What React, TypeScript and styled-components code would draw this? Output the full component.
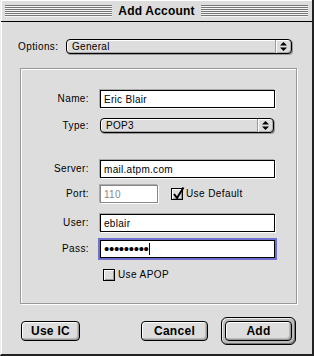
import React from 'react';
import styled, { createGlobalStyle } from 'styled-components';

const GlobalStyle = createGlobalStyle`
  html, body {
    margin: 0;
    padding: 0;
    background: #dddddd;
  }
  * {
    box-sizing: border-box;
  }
`;

const Window = styled.div`
  width: 314px;
  height: 356px;
  display: flex;
  flex-direction: column;
  background: #dddddd;
  border-left: 1px solid #eeeeee;
  border-right: 2px solid #222222;
  border-bottom: 2px solid #222222;
  font-family: 'Liberation Sans', Arial, sans-serif;
  color: #000;
`;

const TitleBar = styled.div`
  height: 22px;
  display: flex;
  align-items: center;
  gap: 3px;
  padding: 0 4px;
  background: #dddddd;
  border-bottom: 1px solid #000;
  box-shadow: inset 1px 1px 0 #fff;
`;

const Stripes = styled.div`
  flex: 1;
  height: 12px;
  background: repeating-linear-gradient(to bottom, #777 0 1px, #f4f4f4 1px 2px);
`;

const Title = styled.div`
  font-size: 12px;
  font-weight: 700;
  letter-spacing: 0.2px;
  padding: 0 3px;
  line-height: 14px;
`;

const Body = styled.div`
  flex: 1;
  display: flex;
  flex-direction: column;
  padding: 17px 16px 0 19px;
  box-shadow: inset 1px 0 0 #fff;
`;

const OptionsRow = styled.div`
  display: grid;
  grid-template-columns: 48px 226px;
  align-items: center;
  margin-left: -2px;
`;

const Label = styled.span<{ $disabled?: boolean }>`
  font-size: 10px;
  line-height: 12px;
  letter-spacing: 0.4px;
  color: ${(p) => (p.$disabled ? '#888' : '#000')};
  white-space: nowrap;
`;

const FieldLabel = styled(Label)`
  text-align: right;
`;

const Popup = styled.div<{ $width: number }>`
  width: ${(p) => p.$width}px;
  height: 15px;
  display: flex;
  align-items: stretch;
  border: 1px solid #000;
  border-radius: 4px;
  background: #dddddd;
  box-shadow: inset 1px 1px 0 #fff, inset -1px -1px 0 #aaa, 1px 1px 0 #999;
  overflow: hidden;
`;

const PopupText = styled.div`
  flex: 1;
  display: flex;
  align-items: center;
  padding-left: 5px;
  font-size: 10px;
  letter-spacing: 0.3px;
`;

const PopupArrows = styled.div`
  width: 16px;
  display: flex;
  align-items: center;
  justify-content: center;
  border-left: 1px solid #999;
  box-shadow: inset 1px 0 0 #fff;
`;

const GroupBox = styled.div`
  margin-top: 14px;
  width: 277px;
  display: flex;
  flex-direction: column;
  padding-bottom: 22px;
  border: 1px solid #999;
  box-shadow: 1px 1px 0 #fff, inset 1px 1px 0 #fff;
`;

const Row = styled.div<{ $top: number }>`
  margin-top: ${(p) => p.$top}px;
  display: grid;
  grid-template-columns: 68px auto;
  column-gap: 11px;
  align-items: center;
`;

const Controls = styled.div`
  display: flex;
  align-items: center;
`;

const TextField = styled.div<{ $width: number; $disabled?: boolean; $focused?: boolean }>`
  width: ${(p) => p.$width}px;
  height: 18px;
  display: flex;
  align-items: center;
  padding-left: 3px;
  background: #fff;
  border: 1px solid ${(p) => (p.$disabled ? '#888' : '#000')};
  box-shadow: ${(p) => (p.$focused ? '0 0 0 2px #6f6fcf' : '1px 1px 0 #fff, -1px -1px 0 #aaa')};
  font-size: 10px;
  letter-spacing: 0.3px;
  color: ${(p) => (p.$disabled ? '#888' : '#000')};
  white-space: nowrap;
`;

const Dots = styled.span`
  font-size: 15px;
  letter-spacing: -0.3px;
  line-height: 10px;
`;

const Caret = styled.span`
  width: 1px;
  height: 12px;
  background: #000;
`;

const CheckItem = styled.div<{ $left: number }>`
  display: flex;
  align-items: center;
  gap: 3px;
  margin-left: ${(p) => p.$left}px;
`;

const CheckBox = styled.div`
  width: 12px;
  height: 12px;
  position: relative;
  border: 1px solid #000;
  background: #dddddd;
  box-shadow: inset 1px 1px 0 #fff, inset -1px -1px 0 #999;
`;

const CheckMark = styled.svg`
  position: absolute;
  left: 0;
  top: -3px;
  overflow: visible;
`;

const ButtonRow = styled.div`
  margin-top: 13px;
  display: flex;
  align-items: center;
  padding-left: 1px;
`;

const Button = styled.div<{ $width: number }>`
  width: ${(p) => p.$width}px;
  height: 20px;
  display: flex;
  align-items: center;
  justify-content: center;
  border: 1px solid #000;
  border-radius: 4px;
  background: #dddddd;
  box-shadow: inset 1px 1px 0 #fff, inset -1px -1px 0 #999, inset -2px -2px 0 #bbb;
  font-size: 12px;
  font-weight: 700;
  letter-spacing: 0.3px;
`;

const DefaultRing = styled.div`
  margin-left: 13px;
  padding: 3px;
  border: 1px solid #000;
  border-radius: 6px;
  background: #bbbbbb;
  box-shadow: inset 1px 1px 0 #eee, inset -1px -1px 0 #777;
`;

const Spacer = styled.div`
  flex: 1;
`;

function UpDownArrows() {
  return (
    <svg width="7" height="9" viewBox="0 0 7 9">
      <path d="M3.5 0 L7 3.5 L0 3.5 Z" fill="#000" />
      <path d="M0 5.5 L7 5.5 L3.5 9 Z" fill="#000" />
    </svg>
  );
}

function Check({ checked, label, left }: { checked?: boolean; label: string; left: number }) {
  return (
    <CheckItem $left={left}>
      <CheckBox>
        {checked && (
          <CheckMark width="13" height="14" viewBox="0 0 13 14">
            <path d="M2 8 L5 12 L11.5 1.5" stroke="#000" strokeWidth="2" fill="none" />
          </CheckMark>
        )}
      </CheckBox>
      <Label>{label}</Label>
    </CheckItem>
  );
}

export default function App() {
  return (
    <>
      <GlobalStyle />
      <Window>
        <TitleBar>
          <Stripes />
          <Title>Add Account</Title>
          <Stripes />
        </TitleBar>
        <Body>
          <OptionsRow>
            <Label>Options:</Label>
            <Popup $width={226}>
              <PopupText>General</PopupText>
              <PopupArrows>
                <UpDownArrows />
              </PopupArrows>
            </Popup>
          </OptionsRow>

          <GroupBox>
            <Row $top={21}>
              <FieldLabel>Name:</FieldLabel>
              <TextField $width={175}>Eric Blair</TextField>
            </Row>
            <Row $top={10}>
              <FieldLabel>Type:</FieldLabel>
              <Popup $width={174}>
                <PopupText>POP3</PopupText>
                <PopupArrows>
                  <UpDownArrows />
                </PopupArrows>
              </Popup>
            </Row>
            <Row $top={27}>
              <FieldLabel>Server:</FieldLabel>
              <TextField $width={175}>mail.atpm.com</TextField>
            </Row>
            <Row $top={7}>
              <FieldLabel>Port:</FieldLabel>
              <Controls>
                <TextField $width={58} $disabled>
                  110
                </TextField>
                <Check checked label="Use Default" left={13} />
              </Controls>
            </Row>
            <Row $top={11}>
              <FieldLabel>User:</FieldLabel>
              <TextField $width={175}>eblair</TextField>
            </Row>
            <Row $top={8}>
              <FieldLabel>Pass:</FieldLabel>
              <TextField $width={175} $focused>
                <Dots>•••••••••</Dots>
                <Caret />
              </TextField>
            </Row>
            <Row $top={11}>
              <span />
              <Check label="Use APOP" left={3} />
            </Row>
          </GroupBox>

          <ButtonRow>
            <Button $width={59}>Use IC</Button>
            <Spacer />
            <Button $width={67}>Cancel</Button>
            <DefaultRing>
              <Button $width={67}>Add</Button>
            </DefaultRing>
          </ButtonRow>
        </Body>
      </Window>
    </>
  );
}
